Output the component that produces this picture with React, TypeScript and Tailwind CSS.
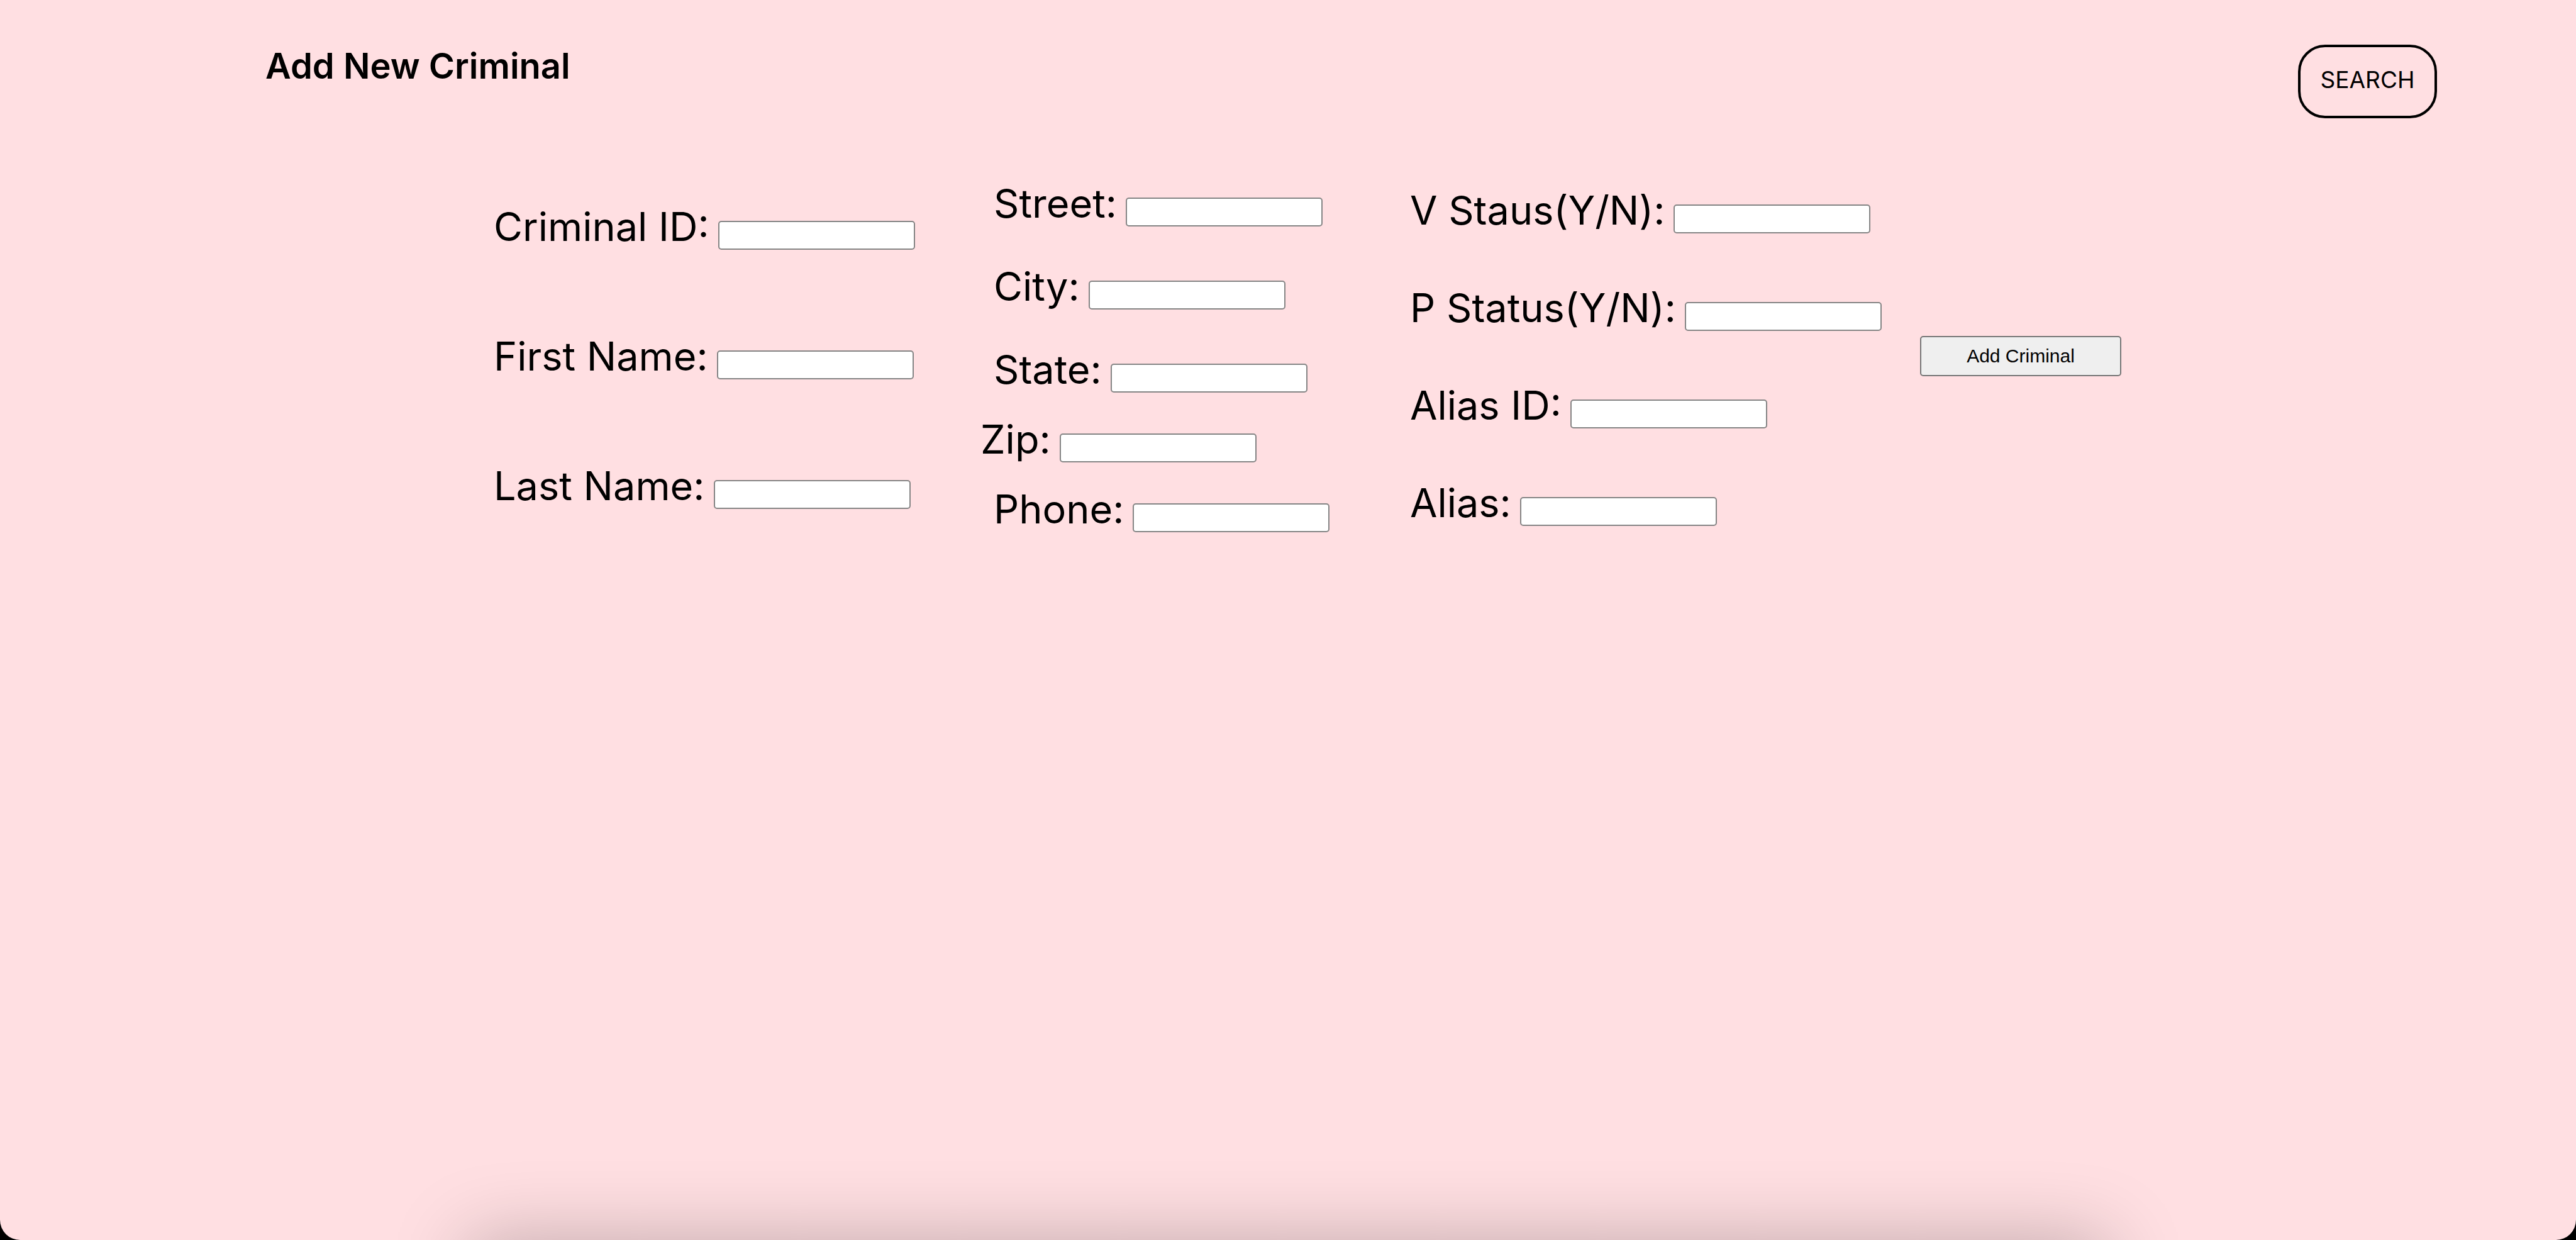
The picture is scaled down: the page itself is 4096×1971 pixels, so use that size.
import type { ReactNode } from "react";

function Field({ id, label }: { id: string; label: string }) {
  return (
    <div className="flex h-[90px] items-start gap-3.5">
      <label htmlFor={id} className="whitespace-nowrap text-[63px] leading-[90px]">
        {label}
      </label>
      <input
        id={id}
        name={id}
        type="text"
        className="mt-[36px] h-[46px] w-[313px] shrink-0 rounded-[5px] border-2 border-[#858585] bg-white px-1 text-[30px]"
      />
    </div>
  );
}

function Column({ className, children }: { className: string; children: ReactNode }) {
  return <div className={`flex flex-col ${className}`}>{children}</div>;
}

export default function App() {
  return (
    <div className="min-h-screen bg-black font-['Inter',sans-serif] text-black">
      <div className="relative flex min-h-screen flex-col overflow-hidden rounded-b-[32px] bg-[#ffdfe2]">
        <header className="flex h-[278px] items-start justify-between pl-[422px] pr-[221px] pt-[71px]">
          <h1 className="text-[56px] font-semibold leading-[68px]">Add New Criminal</h1>
          <button
            type="button"
            className="h-[117px] w-[221px] rounded-[43px] border-4 border-black pb-[6px] text-[37px]"
          >
            SEARCH
          </button>
        </header>

        <form
          className="grid grid-cols-[774px_683px_811px_320px] items-center pl-[785px]"
          onSubmit={(e) => e.preventDefault()}
        >
          <Column className="gap-[116px]">
            <Field id="criminal-id" label="Criminal ID:" />
            <Field id="first-name" label="First Name:" />
            <Field id="last-name" label="Last Name:" />
          </Column>

          <Column className="gap-[21px]">
            <Column className="gap-[42px] pl-[21px]">
              <Field id="street" label="Street:" />
              <Field id="city" label="City:" />
              <Field id="state" label="State:" />
            </Column>
            <Field id="zip" label="Zip:" />
            <Column className="pl-[21px]">
              <Field id="phone" label="Phone:" />
            </Column>
          </Column>

          <Column className="gap-[65px]">
            <Field id="v-status" label="V Staus(Y/N):" />
            <Field id="p-status" label="P Status(Y/N):" />
            <Field id="alias-id" label="Alias ID:" />
            <Field id="alias" label="Alias:" />
          </Column>

          <button
            type="submit"
            className="h-[64px] rounded-[5px] border-2 border-[#767676] bg-[#efefef] pb-0.5 font-['Liberation_Sans',sans-serif] text-[30px]"
          >
            Add Criminal
          </button>
        </form>

        <div className="pointer-events-none absolute inset-x-[18.2%] top-full h-[120px] shadow-[0_0_120px_rgba(0,0,0,0.25)]" />
      </div>
    </div>
  );
}
